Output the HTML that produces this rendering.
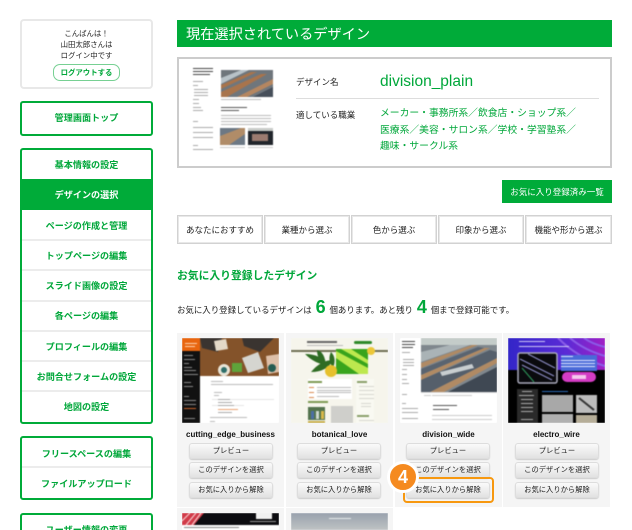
<!DOCTYPE html>
<html lang="ja"><head><meta charset="utf-8">
<style>
html,body{margin:0;padding:0;width:632px;height:530px;overflow:hidden;background:#fff}
body{position:relative;font-family:"Liberation Sans","Noto Sans CJK JP",sans-serif;color:#222}
.a{position:absolute;box-sizing:border-box}
.t{position:absolute;white-space:nowrap;text-align:center}
.g{position:absolute;box-sizing:border-box;left:20px;width:133px;border:2px solid #00ab39;border-radius:3px;background:#fff}
.s{position:absolute;left:20px;width:133px;text-align:center;font-size:9.1px;font-weight:bold;color:#00a73a;line-height:14px;white-space:nowrap}
.d{position:absolute;left:22px;width:129px;height:2px;background:#ececec}
.tab{position:absolute;box-sizing:border-box;top:215px;height:29px;border:1px solid #d2d2d2;box-shadow:inset 0 0 0 1px #e8e8e8;text-align:center;line-height:29px;font-size:8.5px;color:#222;white-space:nowrap}
.card{position:absolute;top:333px;width:107px;height:174px;background:#f5f5f5}
.card2{position:absolute;top:508px;width:107px;height:30px;background:#f5f5f5}
.nm{position:absolute;top:427px;width:107px;text-align:center;font-size:8px;font-weight:bold;color:#111;line-height:16px;white-space:nowrap}
.b{position:absolute;box-sizing:border-box;width:84px;height:16px;border:1px solid #ddd;border-radius:3px;background:linear-gradient(#fafafa,#e2e2e2);text-align:center;font-size:7.3px;line-height:14px;color:#222;white-space:nowrap;box-shadow:0 1px 1px #ccc}
svg{position:absolute;display:block;filter:blur(.45px);clip-path:inset(0)}
b.n{font-size:18px;line-height:18px;color:#00a73a;padding:0 1.5px}
</style></head><body>

<div class="a" style="left:20px;top:19px;width:133px;height:70px;border:2px solid #e8e8e8;border-radius:4px"></div>
<div class="t" style="left:20px;top:28px;width:133px;font-size:7.4px;line-height:11px;color:#222">こんばんは！<br>山田太郎さんは<br>ログイン中です</div>
<div class="a" style="left:53px;top:64px;width:67px;height:17px;border:1px solid #77d093;border-radius:7px;text-align:center;font-size:7.4px;font-weight:bold;color:#00a73a;line-height:15px">ログアウトする</div>

<div class="g" style="top:101px;height:35px"></div>
<div class="s" style="top:111px">管理画面トップ</div>

<div class="g" style="top:148px;height:276px"></div>
<div class="a" style="left:20px;top:179px;width:133px;height:31px;background:#00ab39"></div>
<div class="d" style="top:239px"></div><div class="d" style="top:269px"></div><div class="d" style="top:300px"></div><div class="d" style="top:330px"></div><div class="d" style="top:360px"></div><div class="d" style="top:390px"></div>
<div class="s" style="top:158px">基本情報の設定</div>
<div class="s" style="top:188px;color:#fff">デザインの選択</div>
<div class="s" style="top:219px">ページの作成と管理</div>
<div class="s" style="top:249px">トップページの編集</div>
<div class="s" style="top:279px">スライド画像の設定</div>
<div class="s" style="top:309px">各ページの編集</div>
<div class="s" style="top:340px">プロフィールの編集</div>
<div class="s" style="top:370px">お問合せフォームの設定</div>
<div class="s" style="top:400px">地図の設定</div>

<div class="g" style="top:436px;height:64px"></div>
<div class="d" style="top:466px"></div>
<div class="s" style="top:447px">フリースペースの編集</div>
<div class="s" style="top:477px">ファイルアップロード</div>

<div class="g" style="top:513px;height:40px"></div>
<div class="s" style="top:523px">ユーザー情報の変更</div>

<div class="a" style="left:177px;top:20px;width:435px;height:27px;background:#00ab39;color:#fff;font-size:14.2px;line-height:30px;padding-left:9px;white-space:nowrap;overflow:hidden">現在選択されているデザイン</div>

<div class="a" style="left:177px;top:57px;width:435px;height:111px;border:2px solid #ccc"></div>
<svg style="left:191px;top:64px" width="88" height="88" viewBox="0 0 88 88">
<rect width="88" height="88" fill="#fff"/>
<g fill="#444"><rect x="2" y="4" width="20" height="1"/><rect x="2" y="7" width="20" height="1"/><rect x="2" y="10" width="17" height="1"/></g>
<g fill="#aaa"><rect x="2" y="17" width="10" height="1"/><rect x="2" y="21" width="5" height="1"/><rect x="3" y="25" width="14" height="1"/><rect x="3" y="28" width="14" height="1"/><rect x="3" y="31" width="14" height="1"/><rect x="2" y="35" width="6" height="1"/><rect x="2" y="39" width="6" height="1"/><rect x="2" y="43" width="8" height="1"/><rect x="2" y="46" width="10" height="1"/><rect x="2" y="57" width="5" height="1"/><rect x="2" y="63" width="20" height="1"/><rect x="2" y="68" width="20" height="1"/><rect x="2" y="73" width="20" height="1"/><rect x="2" y="81" width="5" height="1"/><rect x="2" y="85" width="20" height="1"/></g>
<rect x="30" y="6" width="52" height="27" fill="#6f767c"/>
<path d="M30 14L50 6H58L30 20Z" fill="#b8c2c8"/>
<path d="M30 21L60 8H66L30 25Z" fill="#a8744c"/>
<path d="M30 28L70 10H76L36 33H30Z" fill="#a8744c"/>
<path d="M46 33L82 15V20L56 33Z" fill="#b58660"/>
<path d="M62 33L82 23V33Z" fill="#474f5a"/>
<rect x="30" y="35" width="40" height="1" fill="#bbb"/>
<g fill="#555"><rect x="30" y="43" width="26" height="1"/><rect x="30" y="46" width="18" height="1"/></g>
<g fill="#bbb"><rect x="30" y="51" width="50" height="1"/><rect x="30" y="54" width="50" height="1"/><rect x="30" y="57" width="50" height="1"/><rect x="30" y="60" width="46" height="1"/></g>
<rect x="29" y="64" width="25" height="17" fill="#6c7884"/><path d="M29 72L50 64H54V70L38 81H29Z" fill="#b08c68"/>
<rect x="57" y="64" width="25" height="17" fill="#22262c"/><rect x="61" y="70" width="16" height="7" fill="#9c7b70"/><rect x="57" y="64" width="25" height="3" fill="#c9ccc9"/>
<g fill="#ccc"><rect x="29" y="83" width="25" height="1"/><rect x="57" y="83" width="25" height="1"/></g>
</svg>
<div class="t" style="left:296px;top:75px;font-size:8.5px;line-height:14px;color:#222">デザイン名</div>
<div class="t" style="left:380px;top:72px;font-size:15.5px;line-height:20px;color:#00a73a">division_plain</div>
<div class="a" style="left:296px;top:98px;width:303px;height:1px;background:#ddd"></div>
<div class="t" style="left:296px;top:108px;font-size:8.5px;line-height:14px;color:#222">適している職業</div>
<div class="t" style="left:380px;top:106px;font-size:9.8px;line-height:16.5px;color:#00a73a;text-align:left">メーカー・事務所系／飲食店・ショップ系／<br>医療系／美容・サロン系／学校・学習塾系／<br>趣味・サークル系</div>

<div class="a" style="left:502px;top:180px;width:110px;height:23px;background:#00ab39;color:#fff;text-align:center;font-size:8.5px;line-height:25px;white-space:nowrap;overflow:hidden">お気に入り登録済み一覧</div>

<div class="tab" style="left:177px;width:86px">あなたにおすすめ</div>
<div class="tab" style="left:264px;width:86px">業種から選ぶ</div>
<div class="tab" style="left:351px;width:86px">色から選ぶ</div>
<div class="tab" style="left:438px;width:86px">印象から選ぶ</div>
<div class="tab" style="left:525px;width:87px">機能や形から選ぶ</div>

<div class="t" style="left:177px;top:269px;font-size:10.8px;font-weight:bold;line-height:15px;color:#00a73a">お気に入り登録したデザイン</div>
<div class="t" style="left:177px;top:298px;font-size:8.45px;line-height:22px;color:#222">お気に入り登録しているデザインは <b class="n">6</b> 個あります。あと残り <b class="n">4</b> 個まで登録可能です。</div>

<div class="card" style="left:177px"></div><div class="card" style="left:286px"></div><div class="card" style="left:395px"></div><div class="card" style="left:503px"></div>
<div class="card2" style="left:177px"></div><div class="card2" style="left:286px"></div>

<svg style="left:182px;top:338px" width="97" height="85" viewBox="0 0 97 85">
<rect width="97" height="85" fill="#fff"/>
<rect width="97" height="38" fill="#84532a"/>
<path d="M18 0H40L36 14 20 10ZM60 0H92L78 14 62 8Z" fill="#3a3430"/>
<path d="M60 20L76 14 82 30 66 35Z" fill="#d5d5d0"/><path d="M32 3L44 1 46 11 34 13Z" fill="#e4d9c8"/><path d="M84 18L97 16V34L86 36Z" fill="#ddbfa8"/>
<rect x="50" y="25" width="10" height="9" fill="#5fa43a"/><circle cx="42" cy="32" r="6" fill="#e9e4d6"/><circle cx="42" cy="32" r="3" fill="#2f6f6a"/><circle cx="90" cy="30" r="4" fill="#255c52"/>
<rect width="18" height="85" fill="#111"/><rect width="18" height="13" fill="#e8650f"/>
<g fill="#ffd5b0"><rect x="3" y="5" width="12" height="1"/><rect x="3" y="8" width="10" height="1"/></g>
<g fill="#888"><rect x="2" y="17" width="9" height="1"/><rect x="2" y="21" width="11" height="1"/><rect x="2" y="25" width="5" height="1"/><rect x="2" y="29" width="8" height="1"/><rect x="2" y="32" width="12" height="1"/><rect x="2" y="36" width="14" height="1"/><rect x="2" y="44" width="7" height="1"/><rect x="2" y="48" width="9" height="1"/><rect x="2" y="58" width="5" height="1"/><rect x="2" y="62" width="12" height="1"/><rect x="2" y="66" width="12" height="1"/><rect x="2" y="70" width="12" height="1" fill="#c7622a"/><rect x="2" y="80" width="11" height="1"/></g>
<g fill="#bbb"><rect x="29" y="43" width="12" height="1"/><rect x="29" y="46" width="62" height="1"/><rect x="32" y="54" width="8" height="1"/><rect x="32" y="57" width="5" height="1"/><rect x="30" y="61" width="62" height="1" fill="#e5e5e5"/><rect x="30" y="67" width="32" height="1" fill="#e5e5e5"/><rect x="28" y="79" width="37" height="1"/><rect x="28" y="83" width="5" height="1"/></g>
<g fill="#aaa"><rect x="36" y="61" width="12" height="1"/><rect x="36" y="64" width="14" height="1"/><rect x="36" y="67" width="16" height="1"/><rect x="36" y="71" width="20" height="1" fill="#eba272"/><rect x="36" y="74" width="14" height="1"/></g>
</svg>

<svg style="left:291px;top:338px" width="97" height="85" viewBox="0 0 97 85">
<rect width="97" height="85" fill="#f6f5ec"/>
<rect y="12" width="97" height="2" fill="#6e6e52"/>
<g fill="#666"><rect x="16" y="3" width="30" height="2"/></g><rect x="16" y="7" width="36" height="1" fill="#bbb"/>
<rect x="63" y="3" width="18" height="3" rx="1.5" fill="#2f8a2a"/>
<path d="M14 16Q30 16 36 27Q24 26 14 16ZM20 34Q30 22 42 22Q36 34 20 34ZM26 12Q34 14 35 28Q26 22 26 12ZM40 14Q46 20 42 30Q36 22 40 14Z" fill="#2f6c24"/>
<rect x="45" y="11" width="32" height="25" fill="#39a41c"/><path d="M45 13L77 30V36H68L45 20ZM50 11H60L77 22V26Z" fill="#bde84e"/>
<circle cx="40" cy="33" r="6" fill="#e6c02c"/><circle cx="80" cy="13" r="4" fill="#ecc738"/>
<rect x="17" y="41" width="44" height="20" fill="#fff"/><rect x="65" y="41" width="18" height="44" fill="#f9f9f2"/>
<g fill="#bbb"><rect x="18" y="49" width="5" height="1" fill="#da8a50"/><rect x="26" y="49" width="34" height="1"/><rect x="26" y="52" width="34" height="1"/><rect x="26" y="54" width="34" height="1"/><rect x="18" y="54" width="5" height="1" fill="#da8a50"/><rect x="18" y="59" width="5" height="1" fill="#da8a50"/><rect x="26" y="58" width="22" height="1"/></g>
<rect x="17" y="43" width="14" height="2" fill="#7e9a54"/><rect x="17" y="63" width="20" height="2" fill="#7e9a54"/>
<rect x="17" y="69" width="17" height="13" fill="#53734d"/><rect x="20" y="73" width="3" height="8" fill="#4c6ea8"/><rect x="25" y="73" width="3" height="8" fill="#cfd8d0"/><rect x="30" y="73" width="3" height="8" fill="#d9b84a"/><rect x="17" y="83" width="17" height="2" fill="#c9b04e"/>
<rect x="40" y="68" width="22" height="17" fill="#cfcfcb"/>
<g fill="#8aa06a"><rect x="66" y="43" width="10" height="2"/><rect x="66" y="77" width="12" height="2"/></g>
<g fill="#d7d7cf"><rect x="68" y="48" width="15" height="1"/><rect x="68" y="52" width="15" height="1"/><rect x="68" y="56" width="15" height="1"/><rect x="68" y="60" width="15" height="1"/><rect x="70" y="65" width="10" height="1"/><rect x="70" y="68" width="10" height="1"/><rect x="68" y="82" width="15" height="1"/></g>
</svg>

<svg style="left:400px;top:338px" width="97" height="85" viewBox="0 0 97 85">
<rect width="97" height="85" fill="#fff"/>
<g fill="#444"><rect x="2" y="3" width="13" height="1"/><rect x="2" y="6" width="13" height="1"/><rect x="2" y="9" width="11" height="1"/></g>
<g fill="#aaa"><rect x="2" y="14" width="8" height="1"/><rect x="3" y="21" width="11" height="1"/><rect x="3" y="24" width="11" height="1"/><rect x="3" y="27" width="11" height="1"/><rect x="2" y="31" width="5" height="1"/><rect x="2" y="36" width="5" height="1"/><rect x="2" y="41" width="5" height="1"/><rect x="2" y="45" width="7" height="1"/><rect x="2" y="56" width="5" height="1"/><rect x="2" y="65" width="4" height="1"/><rect x="2" y="70" width="16" height="1"/><rect x="2" y="74" width="16" height="1"/><rect x="2" y="80" width="16" height="1"/></g>
<rect x="21" y="0" width="76" height="54" fill="#7f878d"/>
<rect x="21" y="0" width="76" height="7" fill="#c4ccc9"/>
<path d="M21 14L50 7H70L21 24Z" fill="#aab3b6"/>
<path d="M21 25L72 7H78L21 30Z" fill="#b08a64"/>
<path d="M21 37L84 10H90L21 42Z" fill="#b08a64"/>
<path d="M30 54L97 20V25L44 54Z" fill="#b08a64"/>
<path d="M21 31L78 9 84 10 21 37Z" fill="#5a6470"/>
<path d="M21 42L90 12 97 14V20L30 54H21Z" fill="#555f6b"/>
<path d="M48 54L97 29V54Z" fill="#3f4853"/>
<path d="M40 34L72 26 74 30 42 38Z" fill="#c8ced0"/>
<rect x="21" y="54" width="76" height="1" fill="#ddd"/>
<g fill="#555"><rect x="33" y="67" width="24" height="1"/><rect x="33" y="71" width="16" height="1"/></g>
<g fill="#ccc"><rect x="24" y="57" width="7" height="1"/><rect x="32" y="57" width="40" height="1"/><rect x="32" y="77" width="60" height="1"/><rect x="32" y="81" width="60" height="1"/></g>
</svg>

<svg style="left:508px;top:338px" width="97" height="85" viewBox="0 0 97 85">
<rect width="97" height="85" fill="#000"/>
<defs><linearGradient id="p" x1="0" y1="0" x2="1" y2="0"><stop offset="0" stop-color="#3326c8"/><stop offset=".6" stop-color="#5a2bd6"/><stop offset="1" stop-color="#a01fc4"/></linearGradient></defs>
<rect width="97" height="32" fill="url(#p)"/>
<path d="M50 0Q70 20 97 28M62 0Q76 12 97 18M76 0Q84 6 97 9" stroke="#8a5ce8" stroke-width="2" fill="none"/>
<g fill="#cfc8f5"><rect x="11" y="3" width="26" height="1"/><rect x="11" y="8" width="50" height="1"/></g>
<rect x="10" y="15" width="39" height="30" rx="2" fill="#0a0a0e" stroke="#aab" stroke-width="1.5"/>
<path d="M12 21L46 38M14 27L44 42M20 16L47 30" stroke="#8f8fc8" stroke-width="1" fill="none"/><path d="M14 30L26 44" stroke="#2e9a5c" stroke-width="1"/>
<rect x="53" y="17" width="36" height="16" fill="#4a6ad8"/>
<g fill="#dfe4ff"><rect x="53" y="18" width="12" height="1"/><rect x="53" y="22" width="34" height="1"/><rect x="53" y="25" width="34" height="1"/><rect x="53" y="28" width="34" height="1"/></g>
<rect x="54" y="34" width="34" height="10" rx="5" fill="#d43cc4"/><rect x="64" y="37" width="14" height="4" fill="#f5c8ec"/>
<rect x="9" y="51" width="21" height="34" fill="#2a2a2a"/>
<g fill="#aaa"><rect x="14" y="53" width="10" height="1"/><rect x="11" y="57" width="15" height="1"/><rect x="13" y="61" width="12" height="1"/><rect x="13" y="65" width="12" height="1"/><rect x="13" y="69" width="12" height="1"/><rect x="13" y="73" width="12" height="1"/><rect x="13" y="81" width="12" height="1"/></g>
<rect x="34" y="53" width="26" height="1" fill="#2b6bb5"/>
<rect x="34" y="57" width="31" height="17" fill="#a8a8a8"/><rect x="34" y="76" width="31" height="9" fill="#b0b0b0"/>
<rect x="68" y="57" width="21" height="18" fill="#bcbcbc"/><path d="M71 60L86 72" stroke="#333" stroke-width="2"/><rect x="68" y="77" width="21" height="8" fill="#b5ad98"/>
</svg>

<svg style="left:182px;top:513px" width="97" height="17" viewBox="0 0 97 17">
<rect width="97" height="17" fill="#fff"/><rect width="97" height="12" fill="#0c0c10"/>
<path d="M0 0H22L12 12H0Z" fill="#d13a48"/><path d="M4 12L14 0M10 12L19 0M0 8L8 0" stroke="#f4c6c8" stroke-width="1.2"/>
<rect x="74" y="0" width="16" height="6" fill="#f1f1f1"/><g fill="#888"><rect x="2" y="14" width="55" height="1"/></g><g fill="#999"><rect x="68" y="8" width="26" height="1"/></g>
</svg>
<svg style="left:291px;top:513px" width="97" height="17" viewBox="0 0 97 17">
<defs><linearGradient id="k" x1="0" y1="0" x2="0" y2="1"><stop offset="0" stop-color="#98a2ad"/><stop offset="1" stop-color="#bfc3c4"/></linearGradient></defs>
<rect width="97" height="17" fill="url(#k)"/><rect x="38" y="5" width="22" height="1" fill="#e4e8ec"/>
</svg>

<div class="nm" style="left:177px">cutting_edge_business</div>
<div class="nm" style="left:286px">botanical_love</div>
<div class="nm" style="left:395px">division_wide</div>
<div class="nm" style="left:503px">electro_wire</div>

<div class="b" style="left:189px;top:443px">プレビュー</div>
<div class="b" style="left:189px;top:462px">このデザインを選択</div>
<div class="b" style="left:189px;top:482px">お気に入りから解除</div>
<div class="b" style="left:297px;top:443px">プレビュー</div>
<div class="b" style="left:297px;top:462px">このデザインを選択</div>
<div class="b" style="left:297px;top:482px">お気に入りから解除</div>
<div class="b" style="left:406px;top:443px">プレビュー</div>
<div class="b" style="left:406px;top:462px">このデザインを選択</div>
<div class="b" style="left:406px;top:482px">お気に入りから解除</div>
<div class="b" style="left:515px;top:443px">プレビュー</div>
<div class="b" style="left:515px;top:462px">このデザインを選択</div>
<div class="b" style="left:515px;top:482px">お気に入りから解除</div>

<div class="a" style="left:403px;top:477px;width:91px;height:26px;border:2.5px solid #f7980f;border-radius:4px"></div>
<div class="a" style="left:387px;top:461px;width:32px;height:32px;border-radius:50%;background:#f58a1f;border:3px solid #fff;color:#fff;font-weight:bold;font-size:18px;line-height:26px;text-align:center">4</div>

</body></html>
